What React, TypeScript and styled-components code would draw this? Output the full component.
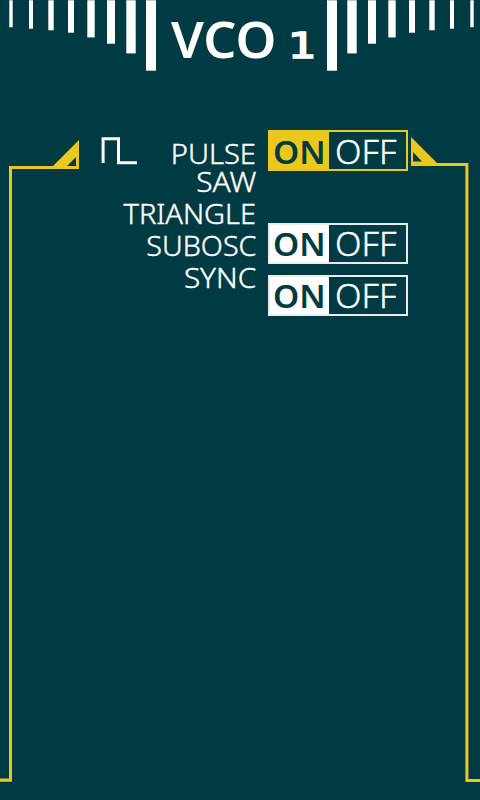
import React from "react";
import styled, { createGlobalStyle } from "styled-components";

const ink = "#003b43";
const gold = "#ebc81e";

const GlobalStyle = createGlobalStyle`
  body { margin: 0; background: ${ink}; }
  * { box-sizing: border-box; }
`;

const Screen = styled.main`
  width: 480px;
  height: 800px;
  overflow: hidden;
  display: flex;
  flex-direction: column;
  background: ${ink};
  color: #fff;
  font-family: "Noto Sans", "Open Sans", sans-serif;
`;

const Header = styled.header`
  display: grid;
  grid-template-columns: 160px 160px 160px;
  height: 130px;
`;

const Title = styled.h1`
  margin: 0;
  height: 80px;
  padding-left: 11px;
  display: flex;
  align-items: baseline;
  font-size: 50px;
  line-height: 79px;
  font-weight: 600;
  white-space: nowrap;
`;

const Stretch = styled.span<{ $x: number; $origin?: string }>`
  display: inline-block;
  transform: scaleX(${(p) => p.$x});
  transform-origin: ${(p) => p.$origin ?? "left"} center;
`;

const Numeral = styled(Stretch)`
  font-family: "DejaVu Sans", sans-serif;
  font-size: 35px;
  font-weight: 400;
  -webkit-text-stroke: 1.6px #fff;
  margin-left: 16px;
`;

const Body = styled.section`
  display: grid;
  grid-template-columns: 80px 176px 12px 140px 3px 69px;
  height: 670px;
`;

const LabelList = styled.ul`
  margin: 9px 0 0;
  padding: 0;
  list-style: none;
  font-size: 28px;
  font-weight: 300;
  -webkit-text-stroke: 0.4px #fff;
`;

const Label = styled.li<{ $height: number }>`
  height: ${(p) => p.$height}px;
  line-height: ${(p) => p.$height}px;
  display: flex;
  justify-content: flex-end;
`;

const PulseIcon = styled.svg`
  width: 60px;
  height: 40px;
  margin: -9px auto 0 0;
`;

const Switches = styled.div`
  grid-column: 4;
  display: flex;
  flex-direction: column;
`;

const FrameRight = styled.svg`
  grid-column: 6;
`;

const Toggle = styled.div<{ $active?: boolean; $gap: number }>`
  --tone: ${(p) => (p.$active ? gold : "#fff")};
  display: grid;
  grid-template-columns: 59px 1fr;
  height: 41px;
  margin-bottom: ${(p) => p.$gap}px;
  border: 2px solid ${(p) => (p.$active ? gold : "#e8eced")};
  font-size: 33px;
  line-height: ${(p) => (p.$active ? 39 : 37)}px;
`;

const On = styled.span`
  background: var(--tone);
  color: ${ink};
  font-weight: 600;
  padding-left: 3px;
`;

const Off = styled.span`
  font-weight: 300;
  -webkit-text-stroke: 0.4px #fff;
  padding-left: 6px;
`;

const bars = [
  [9.3, 3.4, 27.2], [29, 4, 28.7], [48.3, 5.4, 30.3], [68, 6, 32.7],
  [87.3, 7.4, 37.4], [107, 8, 43.7], [126.3, 9.4, 53.4], [146, 10, 70.7],
];

const Bars = ({ right = false }: { right?: boolean }) => (
  <svg width="160" height="80" fill="#fff">
    {bars.map(([x, w, h]) => (
      <rect key={x} x={right ? 163 - x - w : x} y={0.25} width={w} height={h - 0.25} />
    ))}
  </svg>
);

const labels: [string, number, number][] = [
  ["PULSE", 28, 1.04], ["SAW", 28, 1.065], ["TRIANGLE", 36, 1.035], ["SUBOSC", 28, 1.025], ["SYNC", 36, 1.06],
];

const Switch = ({ active, gap }: { active?: boolean; gap: number }) => (
  <Toggle $active={active} $gap={gap}>
    <On><Stretch $x={1.01}>ON</Stretch></On>
    <Off><Stretch $x={1.045}>OFF</Stretch></Off>
  </Toggle>
);

export default function App() {
  return (
    <Screen>
      <GlobalStyle />
      <Header>
        <Bars />
        <Title><Stretch $x={1.04}>VCO</Stretch><Numeral $x={1.28}>1</Numeral></Title>
        <Bars right />
      </Header>
      <Body>
        <svg width="80" height="670" fill={gold} fillRule="evenodd">
          <path d="M9 36H53L79 10V39H12V651.7H0V648.6H9ZM67 36H76V27Z" />
        </svg>
        <LabelList>
          {labels.map(([text, height, x], i) => (
            <Label key={text} $height={height}>
              {i === 0 && (
                <PulseIcon fill="none" stroke="#fff" strokeWidth="3">
                  <path d="M23.1 33V8.8H38.5V32.7H57" />
                </PulseIcon>
              )}
              <Stretch $x={x} $origin="right">{text}</Stretch>
            </Label>
          ))}
        </LabelList>
        <Switches>
          <Switch active gap={52} />
          <Switch gap={11} />
          <Switch gap={0} />
        </Switches>
        <FrameRight width="69" height="670" fill={gold} fillRule="evenodd">
          <path d="M0 7L26 33H57.4V649H69V652H54.4V36H0ZM2 22V31.5H11Z" />
        </FrameRight>
      </Body>
    </Screen>
  );
}
